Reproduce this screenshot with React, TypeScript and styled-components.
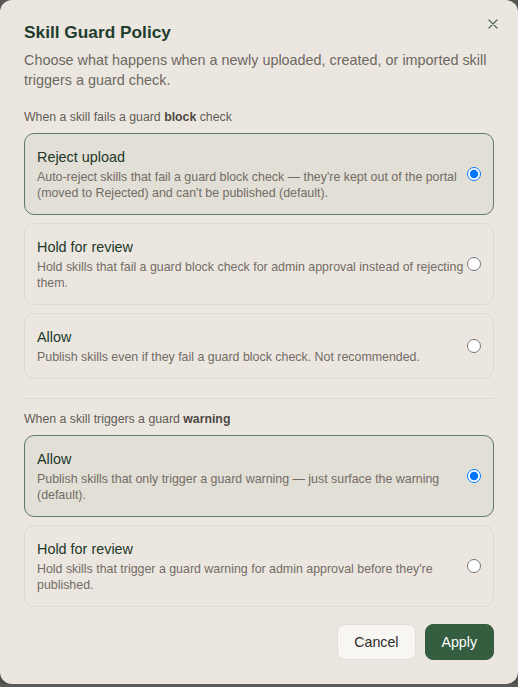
import React, { useState } from "react";
import styled, { createGlobalStyle } from "styled-components";

const GlobalStyle = createGlobalStyle`
  html, body {
    margin: 0;
    padding: 0;
    background: #5b5b58;
  }
  body {
    font-family: "Liberation Sans", Arial, sans-serif;
  }
`;

const Dialog = styled.div`
  box-sizing: border-box;
  width: 518px;
  height: 684px;
  background: #ebe7e0;
  border-radius: 12px;
  box-shadow: 0 2px 6px rgba(0, 0, 0, 0.35);
  padding: 20px 24px 24px;
  display: flex;
  flex-direction: column;
  position: relative;
`;

const CloseButton = styled.button`
  position: absolute;
  top: 16px;
  right: 17px;
  width: 16px;
  height: 16px;
  padding: 0;
  border: none;
  background: none;
  color: #4f6b5a;
  cursor: pointer;
  display: flex;
  align-items: center;
  justify-content: center;
`;

const Title = styled.h2`
  margin: 0;
  font-size: 17.3px;
  line-height: 24px;
  font-weight: 700;
  color: #1f3d2c;
`;

const Lead = styled.p`
  margin: 6px 0 0;
  font-size: 14.4px;
  line-height: 20px;
  color: #6e6862;
`;

const SectionLabel = styled.div<{ $first?: boolean }>`
  margin-top: ${(p) => (p.$first ? "19px" : "12px")};
  font-size: 12.3px;
  line-height: 16px;
  color: #625c56;

  b {
    font-weight: 700;
    color: #4d4843;
  }
`;

const OptionList = styled.div`
  margin-top: 8px;
  display: flex;
  flex-direction: column;
  gap: 8px;
`;

const Card = styled.label<{ $selected: boolean }>`
  display: flex;
  align-items: center;
  padding: 13px 12px 13px 12px;
  border-radius: 10px;
  border: 1px solid ${(p) => (p.$selected ? "#5d7c62" : "#dedad2")};
  background: ${(p) => (p.$selected ? "#e2dfd6" : "#ebe7e0")};
  cursor: pointer;
`;

const CardText = styled.div`
  flex: 1;
  display: flex;
  flex-direction: column;
  gap: 2px;
`;

const CardTitle = styled.div`
  font-size: 14.4px;
  line-height: 20px;
  color: #22372a;
`;

const CardDesc = styled.div`
  font-size: 12.4px;
  line-height: 16px;
  color: #736c65;
`;

const Radio = styled.input`
  width: 14px;
  height: 14px;
  margin: 0 0 0 2px;
  flex-shrink: 0;
`;

const Divider = styled.hr`
  margin: 19px 0 0;
  border: none;
  border-top: 1px solid #dcd8d0;
`;

const Footer = styled.div`
  margin-top: auto;
  display: flex;
  justify-content: flex-end;
  gap: 9px;
`;

const Button = styled.button<{ $primary?: boolean }>`
  height: 36px;
  padding: 0 16px;
  border-radius: 8px;
  font-family: "Liberation Sans", Arial, sans-serif;
  font-size: 14.2px;
  cursor: pointer;
  border: 1px solid ${(p) => (p.$primary ? "#355e40" : "#e2ded7")};
  background: ${(p) => (p.$primary ? "#355e40" : "#f7f6f3")};
  color: ${(p) => (p.$primary ? "#ffffff" : "#2b2b2b")};
`;

type Option = { id: string; title: string; desc: string };

const blockOptions: Option[] = [
  {
    id: "reject",
    title: "Reject upload",
    desc: "Auto-reject skills that fail a guard block check — they're kept out of the portal (moved to Rejected) and can't be published (default).",
  },
  {
    id: "hold",
    title: "Hold for review",
    desc: "Hold skills that fail a guard block check for admin approval instead of rejecting them.",
  },
  {
    id: "allow",
    title: "Allow",
    desc: "Publish skills even if they fail a guard block check. Not recommended.",
  },
];

const warnOptions: Option[] = [
  {
    id: "allow",
    title: "Allow",
    desc: "Publish skills that only trigger a guard warning — just surface the warning (default).",
  },
  {
    id: "hold",
    title: "Hold for review",
    desc: "Hold skills that trigger a guard warning for admin approval before they're published.",
  },
];

const OptionGroup = ({
  name,
  options,
  value,
  onChange,
}: {
  name: string;
  options: Option[];
  value: string;
  onChange: (v: string) => void;
}) => (
  <OptionList>
    {options.map((o) => (
      <Card key={o.id} $selected={value === o.id}>
        <CardText>
          <CardTitle>{o.title}</CardTitle>
          <CardDesc>{o.desc}</CardDesc>
        </CardText>
        <Radio
          type="radio"
          name={name}
          checked={value === o.id}
          onChange={() => onChange(o.id)}
        />
      </Card>
    ))}
  </OptionList>
);

const App = () => {
  const [blockPolicy, setBlockPolicy] = useState("reject");
  const [warnPolicy, setWarnPolicy] = useState("allow");

  return (
    <>
      <GlobalStyle />
      <Dialog>
        <CloseButton aria-label="Close">
          <svg width="10" height="10" viewBox="0 0 10 10">
            <path
              d="M1 1L9 9M9 1L1 9"
              stroke="currentColor"
              strokeWidth="1.3"
              strokeLinecap="round"
            />
          </svg>
        </CloseButton>
        <Title>Skill Guard Policy</Title>
        <Lead>
          Choose what happens when a newly uploaded, created, or imported skill
          triggers a guard check.
        </Lead>

        <SectionLabel $first>
          When a skill fails a guard <b>block</b> check
        </SectionLabel>
        <OptionGroup
          name="block"
          options={blockOptions}
          value={blockPolicy}
          onChange={setBlockPolicy}
        />

        <Divider />

        <SectionLabel>
          When a skill triggers a guard <b>warning</b>
        </SectionLabel>
        <OptionGroup
          name="warning"
          options={warnOptions}
          value={warnPolicy}
          onChange={setWarnPolicy}
        />

        <Footer>
          <Button>Cancel</Button>
          <Button $primary>Apply</Button>
        </Footer>
      </Dialog>
    </>
  );
};

export default App;
